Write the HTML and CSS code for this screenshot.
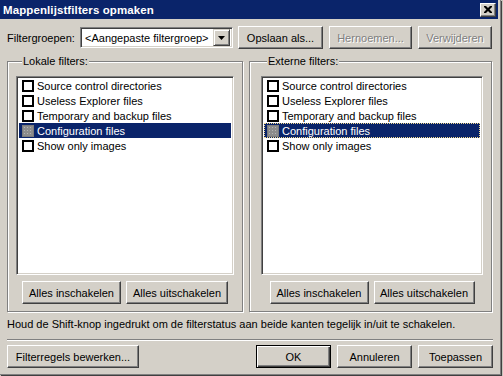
FILE: index.html
```html
<!DOCTYPE html>
<html lang="nl">
<head>
    <meta charset="UTF-8">
    <title>Mappenlijstfilters opmaken</title>
    <link rel="stylesheet" href="styles.css">
</head>
<body>
<div class="screen">
    <div class="dialog">
        <div class="titlebar">
            <span class="title">Mappenlijstfilters opmaken</span>
            <button class="close" title="Sluiten">
                <svg width="8" height="7" viewBox="0 0 8 7"><path d="M0 0h2l2 2 2-2h2v1l-2.5 2.5L8 6v1H6L4 5 2 7H0V6l2.5-2.5L0 1z" fill="#000"/></svg>
            </button>
        </div>
        <div class="body">
            <div class="toprow">
                <label class="label">Filtergroepen:</label>
                <div class="combo">
                    <span class="combo-text">&lt;Aangepaste filtergroep&gt;</span>
                    <span class="combo-drop">
                        <svg width="7" height="4" viewBox="0 0 7 4"><path d="M0 0h7L3.5 4z" fill="#000"/></svg>
                    </span>
                </div>
                <button class="btn w-save">Opslaan als...</button>
                <button class="btn w-rename" disabled>Hernoemen...</button>
                <button class="btn w-delete" disabled>Verwijderen</button>
            </div>

            <div class="groups">
                <fieldset class="group group-left">
                    <legend>Lokale filters:</legend>
                    <ul class="list">
                        <li class="item"><span class="check"></span>Source control directories</li>
                        <li class="item"><span class="check"></span>Useless Explorer files</li>
                        <li class="item"><span class="check"></span>Temporary and backup files</li>
                        <li class="item selected"><span class="check grayed"></span>Configuration files</li>
                        <li class="item"><span class="check"></span>Show only images</li>
                    </ul>
                    <div class="group-buttons">
                        <button class="btn w-on">Alles inschakelen</button>
                        <button class="btn w-off">Alles uitschakelen</button>
                    </div>
                </fieldset>
                <fieldset class="group group-right">
                    <legend>Externe filters:</legend>
                    <ul class="list">
                        <li class="item"><span class="check"></span>Source control directories</li>
                        <li class="item"><span class="check"></span>Useless Explorer files</li>
                        <li class="item"><span class="check"></span>Temporary and backup files</li>
                        <li class="item selected focused"><span class="check grayed"></span>Configuration files</li>
                        <li class="item"><span class="check"></span>Show only images</li>
                    </ul>
                    <div class="group-buttons">
                        <button class="btn w-on">Alles inschakelen</button>
                        <button class="btn w-off2">Alles uitschakelen</button>
                    </div>
                </fieldset>
            </div>

            <p class="hint">Houd de Shift-knop ingedrukt om de filterstatus aan beide kanten tegelijk in/uit te schakelen.</p>
            <div class="separator"></div>

            <div class="bottomrow">
                <button class="btn w-rules">Filterregels bewerken...</button>
                <div class="spacer"></div>
                <button class="btn default w-std">OK</button>
                <button class="btn w-std">Annuleren</button>
                <button class="btn w-std">Toepassen</button>
            </div>
        </div>
    </div>
</div>
</body>
</html>
```

FILE: styles.css
```css
* {
    box-sizing: border-box;
}
body {
    margin: 0;
    font-family: "Liberation Sans", Arial, sans-serif;
    font-size: 11px;
    color: #000;
    background-color: #3a3a3a;
}
.screen {
    width: 503px;
    height: 376px;
    overflow: hidden;
    background-color: #c8c4bc;
}
.dialog {
    width: 501px;
    height: 375px;
    background-color: #d4d0c8;
    border-right: 1px solid #808080;
    border-bottom: 1px solid #808080;
    box-shadow: 1px 1px 0 #404040;
    padding-right: 2px;
}

/* title bar */
.titlebar {
    height: 19px;
    background-color: #0a246a;
    display: flex;
    align-items: center;
    padding: 0 2px 0 3px;
}
.title {
    flex: 1;
    color: #fff;
    font-weight: bold;
    font-size: 11.5px;
    letter-spacing: 0.1px;
}
.close {
    width: 16px;
    height: 14px;
    padding: 0;
    margin: 0;
    background-color: #d4d0c8;
    border: 1px solid;
    border-color: #fff #404040 #404040 #fff;
    box-shadow: inset -1px -1px #808080;
    display: flex;
    align-items: center;
    justify-content: center;
}

.body {
    padding: 7px 5px 0 7px;
}

/* buttons */
.btn {
    height: 23px;
    padding: 0;
    margin: 0;
    font-family: inherit;
    font-size: 11px;
    color: #000;
    background-color: #d4d0c8;
    border: 1px solid;
    border-color: #fff #404040 #404040 #fff;
    box-shadow: inset -1px -1px #808080, inset 1px 1px #d4d0c8;
}
.btn:disabled {
    color: #808080;
    text-shadow: 1px 1px 0 #fff;
}
.btn.default {
    border: 1px solid #000;
    box-shadow: inset 1px 1px #fff, inset -1px -1px #404040, inset -2px -2px #808080;
}
.w-save { width: 85px; }
.w-rename { width: 83px; }
.w-delete { width: 74px; }
.w-on { width: 99px; }
.w-off { width: 102px; }
.w-off2 { width: 101px; }
.w-rules { width: 132px; }
.w-std { width: 75px; }

/* top row */
.toprow {
    display: flex;
    align-items: center;
    gap: 6px;
    height: 23px;
}
.label {
    width: 67px;
}
.combo {
    width: 153px;
    height: 21px;
    margin-right: -1px;
    background-color: #fff;
    border: 1px solid;
    border-color: #808080 #fff #fff #808080;
    box-shadow: inset 1px 1px #404040, inset -1px -1px #d4d0c8;
    display: flex;
    align-items: center;
    padding: 2px 2px 2px 4px;
}
.combo-text {
    flex: 1;
}
.combo-drop {
    width: 17px;
    height: 17px;
    background-color: #d4d0c8;
    border: 1px solid;
    border-color: #d4d0c8 #404040 #404040 #d4d0c8;
    box-shadow: inset 1px 1px #fff, inset -1px -1px #808080;
    display: flex;
    align-items: center;
    justify-content: center;
}

/* group boxes */
.groups {
    display: flex;
    gap: 6px;
    margin-top: 6px;
}
.group {
    margin: 0;
    height: 257px;
    border: 1px solid #808080;
    box-shadow: inset 1px 1px #fff, 1px 1px 0 #fff;
    display: flex;
    flex-direction: column;
    padding: 8px 8px 7px 8px;
}
.group legend {
    padding: 0 1px;
    margin-left: 6px;
    background-color: #d4d0c8;
    line-height: 13px;
}
.group-left {
    width: 236px;
}
.group-right {
    width: 243px;
    padding-left: 11px;
}
.list {
    list-style: none;
    margin: 0;
    flex: 1;
    padding: 1px 2px;
    background-color: #fff;
    border: 1px solid;
    border-color: #808080 #fff #fff #808080;
    box-shadow: inset 1px 1px #404040, inset -1px -1px #d4d0c8;
}
.item {
    height: 15px;
    display: flex;
    align-items: center;
    padding-left: 3px;
    white-space: nowrap;
}
.item.selected {
    background-color: #0a246a;
    color: #fff;
}
.item.focused {
    outline: 1px dotted #f2d98e;
    outline-offset: -1px;
}
.check {
    width: 12px;
    height: 12px;
    margin-right: 3px;
    border: 2px solid #000;
    background-color: #fff;
}
.check.grayed {
    border: 1px solid #7c7c7c;
    background-color: #8c8c8c;
    background-image: radial-gradient(circle, #b4b4b4 0.6px, transparent 0.9px);
    background-size: 3px 3px;
}
.group-buttons {
    display: flex;
    justify-content: center;
    gap: 5px;
    margin-top: 6px;
}

/* footer */
.hint {
    margin: 6px 0 0 0;
    line-height: 13px;
}
.separator {
    margin-top: 8px;
    height: 2px;
    border-top: 1px solid #808080;
    border-bottom: 1px solid #fff;
}
.bottomrow {
    display: flex;
    gap: 6px;
    margin-top: 4px;
}
.spacer {
    flex: 1;
}
```
